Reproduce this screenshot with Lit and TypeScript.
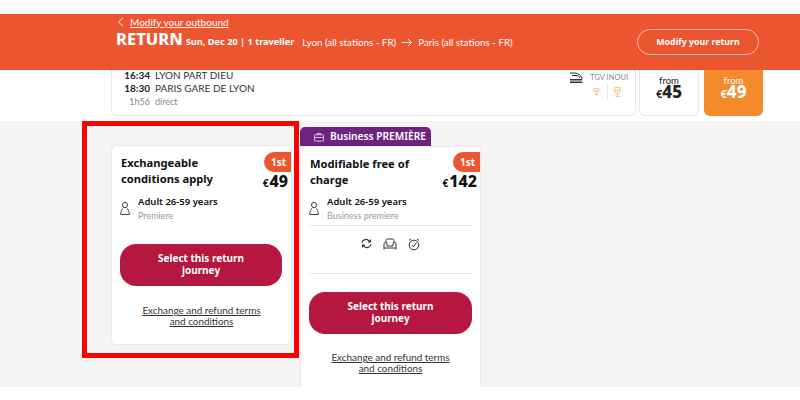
import { LitElement, html, css, svg } from "lit";
import { customElement } from "lit/decorators.js";

const person = svg`<svg width="10" height="15" viewBox="0 0 10 15" fill="none" stroke="#444" stroke-width="1"><ellipse cx="5" cy="4" rx="2.500" ry="2.700"/><path d="M3.300 7C1.800 8 .8 10.500.7 13.500h8.600C9.200 10.500 8.200 8 6.700 7"/></svg>`;

@customElement("app-root")
export class AppRoot extends LitElement {
  static styles = css`
    :host { display: block; width: 800px; height: 400px; overflow: hidden; background: #fff; position: relative; font-family: "Lato", "Liberation Sans", sans-serif; color: #222; }
    .banner { margin-top: 14px; height: 56px; background: #eb5530; color: #fff; box-sizing: border-box; padding: 2px 41px 0 117px; display: flex; justify-content: space-between; position: relative; z-index: 1; }
    .back { display: flex; align-items: center; gap: 6px; font-size: 10px; line-height: 12px; margin-bottom: 1px; }
    .back span { text-decoration: underline; }
    .line { display: flex; align-items: baseline; white-space: nowrap; }
    .ret { font: 800 16.500px/20px "Noto Sans", sans-serif; margin-left: -1px; }
    .date { font: 700 9.200px/20px "Noto Sans", sans-serif; margin-left: 3px; }
    .route { font-size: 9.800px; margin-left: 8px; display: flex; align-items: center; gap: 6px; transform: translateY(1px); }
    .modify { align-self: flex-start; margin-top: 13px; width: 122px; height: 26px; box-sizing: border-box; border: 1px solid #f7c0ae; border-radius: 13px; font: 700 8.800px/24px "Noto Sans", sans-serif; text-align: center; }
    .trip { display: flex; height: 51px; padding-left: 111px; box-sizing: border-box; }
    .journey { width: 525px; height: 46px; box-sizing: border-box; border: 1px solid #e8e8e8; border-top: 0; border-radius: 0 0 6px 6px; padding: 0 7px 0 12px; display: flex; justify-content: space-between; }
    .times { display: grid; grid-template-columns: 26px auto; column-gap: 5px; font-size: 10px; line-height: 13px; margin-top: -1px; align-content: start; color: #333; }
    .times b { font-weight: 700; color: #222; text-align: right; font-size: 10px; }
    .times .dim { color: #888; font-size: 9px; text-align: left; }
    .times .dim.r { text-align: right; }
    .train { display: flex; flex-direction: column; align-items: flex-end; padding-top: 1px; }
    .train-top { display: flex; align-items: center; gap: 7px; font-size: 7.500px; color: #888; }
    .amen { display: flex; align-items: center; gap: 6px; padding-right: 7px; }
    .amen i { width: 1px; height: 15px; background: #f3e2d0; }
    .from { width: 60px; height: 46px; margin-left: 3px; box-sizing: border-box; border: 1px solid #e8e8e8; border-top: 0; border-radius: 0 0 6px 6px; text-align: center; font-size: 9.500px; line-height: 10px; padding-top: 6px; }
    .from.on { width: 59px; background: #f58a2c; border: 0; color: #fff; margin-left: 5px; }
    .price { display: flex; justify-content: center; align-items: baseline; font: 800 17px/12px "Noto Sans", sans-serif; }
    .price small { font-size: 11px; font-weight: 700; }
    .fares { height: 266px; background: #f5f4f2; display: flex; align-items: flex-start; padding-left: 111px; gap: 8px; overflow: hidden; }
    .card { width: 181px; box-sizing: border-box; background: #fff; border: 1px solid #e9e8e6; border-radius: 6px; padding: 9px 8px 0; position: relative; }
    .first { margin-top: 24px; height: 200px; }
    .col { margin-top: 6px; align-self: stretch; display: flex; flex-direction: column; }
    .tab { width: 131px; height: 19px; background: #6f2380; color: #fff; border-radius: 5px 5px 0 0; display: flex; align-items: center; gap: 6px; padding-left: 14px; box-sizing: border-box; font: 600 10.200px/19px "Noto Sans", sans-serif; }
    .col .card { flex: 1; border-radius: 0 4px 0 0; border-bottom: 0; }
    .title { font: 700 11.200px/16px "Noto Sans", sans-serif; color: #111; height: 32px; width: 130px; padding-left: 1px; box-sizing: border-box; }
    .badge { position: absolute; right: 0; top: 6px; background: #eb5530; color: #fff; font: 700 10px/20px "Noto Sans", sans-serif; padding: 0 5px 0 7px; border-radius: 10px 0 0 10px; }
    .cost { position: absolute; right: 3px; top: 26px; display: flex; align-items: baseline; font: 800 16px/18px "Noto Sans", sans-serif; color: #111; }
    .cost small { font-size: 10px; font-weight: 700; margin-right: 1px; }
    .col .badge { top: 5px; }
    .col .cost { top: 25px; }
    .pax { display: flex; align-items: center; gap: 8px; margin-top: 8px; }
    .pax div b { display: block; font: 600 9.500px/14px "Noto Sans", sans-serif; color: #111; }
    .pax div span { display: block; font-size: 9px; line-height: 13px; color: #999; }
    .btn { display: block; width: 162px; height: 42px; border-radius: 16px; background: #b51741; color: #fff; font: 700 10px/12px "Noto Sans", sans-serif; text-align: center; box-sizing: border-box; padding-top: 8px; margin-top: 22px; }
    .terms { text-align: center; font-size: 9.900px; line-height: 11px; text-decoration: underline; color: #333; margin-top: 19px; }
    .rule { border-top: 1px solid #e9e8e6; margin-top: 3px; }
    .icons { display: flex; justify-content: center; gap: 11px; padding-top: 12px; height: 35px; align-items: flex-start; border-bottom: 1px solid #e9e8e6; }
    .col .pax { margin-top: 7px; }
    .col .btn { margin-top: 18px; width: 163px; }
    .col .terms { margin-top: 18px; }
    .red { position: absolute; left: 82px; top: 121px; width: 217px; height: 237px; box-sizing: border-box; border: 5px solid #f00; pointer-events: none; }
  `;

  render() {
    return html`
      <div class="banner">
        <div>
          <div class="back">
            <svg width="7" height="10" viewBox="0 0 7 10" fill="none" stroke="#fff" stroke-width="0.9"><path d="M6 1 1.500 5 6 9"/></svg>
            <span>Modify your outbound</span>
          </div>
          <div class="line">
            <span class="ret">RETURN</span>
            <span class="date">Sun, Dec 20 | 1 traveller</span>
            <span class="route">Lyon (all stations - FR)
              <svg width="10" height="9" viewBox="0 0 10 9" fill="none" stroke="#fff" stroke-width="0.9"><path d="M0 4.500h9.500M6 1l3.500 3.500L6 8"/></svg>
              Paris (all stations - FR)</span>
          </div>
        </div>
        <div class="modify">Modify your return</div>
      </div>
      <div class="trip">
        <div class="journey">
          <div class="times">
            <b>16:34</b><span>LYON PART DIEU</span>
            <b>18:30</b><span>PARIS GARE DE LYON</span>
            <span class="dim r">1h56</span><span class="dim">direct</span>
          </div>
          <div class="train">
            <div class="train-top">
              <svg width="14" height="13" viewBox="0 0 14 13" fill="none" stroke="#333" stroke-width="1"><path d="M1 2h5c3 0 6 2.500 7 5v1.500H1M1 11.500h12.500M3 4.500h6L11 7M1 10h12"/></svg>
              TGV INOUI
            </div>
            <div class="amen">
              <svg width="9" height="9" viewBox="0 0 10 9" fill="none" stroke="#f6b26b" stroke-width="1.100"><path d="M.5 3a6.500 6.500 0 0 1 9 0M2 4.800a4.300 4.300 0 0 1 6 0M3.500 6.500a2.200 2.200 0 0 1 3 0"/><circle cx="5" cy="8" r=".6" fill="#f6b26b"/></svg>
              <i></i>
              <svg width="7" height="12" viewBox="0 0 8 12" fill="none" stroke="#f6b26b" stroke-width="1"><path d="M1 1h6v3.500a3 3 0 0 1-6 0zM4 7.500V11M1.500 11h5M1 4h6"/></svg>
            </div>
          </div>
        </div>
        <div class="from">from<div class="price"><small>€</small>45</div></div>
        <div class="from on">from<div class="price"><small>€</small>49</div></div>
      </div>
      <div class="fares">
        <div class="card first">
          <div class="title">Exchangeable conditions apply</div>
          <div class="badge">1st</div>
          <div class="cost"><small>€</small>49</div>
          <div class="pax">${person}<div><b>Adult 26-59 years</b><span>Premiere</span></div></div>
          <div class="btn">Select this return<br />journey</div>
          <div class="terms">Exchange and refund terms<br />and conditions</div>
        </div>
        <div class="col">
          <div class="tab">
            <svg width="10" height="10" viewBox="0 0 11 10" fill="none" stroke="#e3cfe8" stroke-width="1"><rect x=".5" y="2.500" width="10" height="7" rx="1"/><path d="M3.500 2.500V1h4v1.500M.5 5.500h10"/></svg>
            <span>Business PREMIÈRE</span>
          </div>
          <div class="card">
            <div class="title">Modifiable free of charge</div>
            <div class="badge">1st</div>
            <div class="cost"><small>€</small>142</div>
            <div class="pax">${person}<div><b>Adult 26-59 years</b><span>Business premiere</span></div></div>
            <div class="rule"></div>
            <div class="icons">
              <svg width="11" height="11" viewBox="0 0 11 11" fill="none" stroke="#333" stroke-width="1.100"><path d="M1 5a4 4 0 0 1 7-2.200L9.500 4M10 6a4 4 0 0 1-7 2.200L1.500 7M9.500 1.500V4H7M1.500 9.500V7H4"/></svg>
              <svg width="14" height="12" viewBox="0 0 14 12" fill="none" stroke="#333" stroke-width="1"><path d="M3 5V2.500A1.500 1.500 0 0 1 4.500 1h5A1.500 1.500 0 0 1 11 2.500V5M1 6a1.500 1.500 0 0 1 3 0v2h6V6a1.500 1.500 0 0 1 3 0v4H1zM1 10v1.500M13 10v1.500"/></svg>
              <svg width="12" height="13" viewBox="0 0 12 13" fill="none" stroke="#333" stroke-width="1"><circle cx="6" cy="7" r="4.800"/><path d="M3.800 7 5.500 8.800 8.500 4.800M1 2.500 3 1M11 2.500 9 1"/></svg>
            </div>
            <div class="btn">Select this return<br />journey</div>
            <div class="terms">Exchange and refund terms<br />and conditions</div>
          </div>
        </div>
      </div>
      <div class="red"></div>
    `;
  }
}
